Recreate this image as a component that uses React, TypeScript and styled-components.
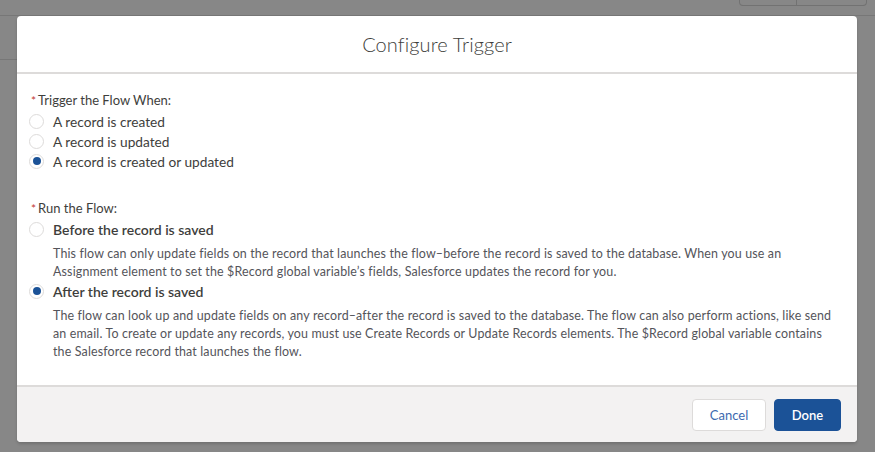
import React from "react";
import styled, { createGlobalStyle } from "styled-components";

const GlobalStyle = createGlobalStyle`
  html, body {
    margin: 0;
    padding: 0;
    background: #878787;
    font-family: "Lato", "Liberation Sans", sans-serif;
  }
  * {
    box-sizing: border-box;
  }
`;

const triggerOptions = [
  { id: "create", label: "A record is created", checked: false },
  { id: "update", label: "A record is updated", checked: false },
  { id: "both", label: "A record is created or updated", checked: true },
];

const runOptions = [
  {
    id: "before",
    label: "Before the record is saved",
    checked: false,
    description:
      "This flow can only update fields on the record that launches the flow\u2013before the record is saved to the database. When you use an Assignment element to set the $Record global variable\u2019s fields, Salesforce updates the record for you.",
  },
  {
    id: "after",
    label: "After the record is saved",
    checked: true,
    description:
      "The flow can look up and update fields on any record\u2013after the record is saved to the database. The flow can also perform actions, like send an email. To create or update any records, you must use Create Records or Update Records elements. The $Record global variable contains the Salesforce record that launches the flow.",
  },
];

const App = () => {
  return (
    <Page>
      <GlobalStyle />
      <UnderHeader>
        <ButtonGroup>
          <GroupButton />
          <GroupButton />
        </ButtonGroup>
      </UnderHeader>
      <UnderBody />

      <Modal>
        <ModalHeader>
          <Title>Configure Trigger</Title>
        </ModalHeader>
        <ModalBody>
          <Fieldset>
            <Legend>
              <Required>*</Required>Trigger the Flow When:
            </Legend>
            {triggerOptions.map((opt) => (
              <Option key={opt.id}>
                <Radio checked={opt.checked} />
                <OptionLabel>{opt.label}</OptionLabel>
              </Option>
            ))}
          </Fieldset>

          <Fieldset $spaced>
            <Legend>
              <Required>*</Required>Run the Flow:
            </Legend>
            {runOptions.map((opt) => (
              <RunOption key={opt.id}>
                <Option>
                  <Radio checked={opt.checked} />
                  <OptionTitle>{opt.label}</OptionTitle>
                </Option>
                <Description>{opt.description}</Description>
              </RunOption>
            ))}
          </Fieldset>
        </ModalBody>
        <ModalFooter>
          <NeutralButton>Cancel</NeutralButton>
          <BrandButton>Done</BrandButton>
        </ModalFooter>
      </Modal>
    </Page>
  );
};

export default App;

const Page = styled.div`
  position: relative;
  width: 875px;
  height: 452px;
  overflow: hidden;
  background: #878787;
`;

const UnderHeader = styled.div`
  height: 16px;
  border-bottom: 1px solid #777777;
  display: flex;
  justify-content: flex-end;
  padding-right: 8px;
`;

const ButtonGroup = styled.div`
  display: flex;
  height: 7px;
  margin-top: -1px;
  border: 1px solid #727272;
  border-top: none;
  border-radius: 0 0 4px 4px;
`;

const GroupButton = styled.div`
  width: 56px;
  & + & {
    border-left: 1px solid #727272;
    width: 70px;
  }
`;

const UnderBody = styled.div`
  height: 44px;
  border-bottom: 1px solid #777777;
  width: 17px;
`;

const Modal = styled.div`
  position: absolute;
  left: 17px;
  top: 16px;
  width: 840px;
  height: 426px;
  background: #ffffff;
  border-radius: 4px;
  overflow: hidden;
  display: flex;
  flex-direction: column;
  box-shadow: 0 2px 3px rgba(0, 0, 0, 0.16);
`;

const ModalHeader = styled.div`
  height: 58px;
  border-bottom: 2px solid #dddbda;
  display: flex;
  align-items: center;
  justify-content: center;
  padding-bottom: 1px;
`;

const Title = styled.h2`
  margin: 0;
  font-size: 20px;
  font-weight: 300;
  color: #3e3e3c;
  letter-spacing: 0.1px;
`;

const ModalBody = styled.div`
  flex: 1;
  padding: 17px 12px 0 12px;
  color: #3e3e3c;
`;

const Fieldset = styled.div<{ $spaced?: boolean }>`
  display: flex;
  flex-direction: column;
  margin-top: ${(p) => (p.$spaced ? "28px" : "0")};
`;

const Legend = styled.div`
  font-size: 13px;
  line-height: 18px;
  color: #3e3e3c;
  margin-bottom: 1px;
  padding-left: 2px;
`;

const Required = styled.span`
  color: #c23934;
  margin-right: 2px;
  font-size: 12px;
`;

const Option = styled.label`
  display: flex;
  align-items: center;
  height: 20px;
`;

const Radio = styled.span<{ checked?: boolean }>`
  width: 15px;
  height: 15px;
  border-radius: 50%;
  border: 1px solid #dddbda;
  background: #ffffff;
  display: inline-flex;
  align-items: center;
  justify-content: center;
  margin-right: 9px;
  flex-shrink: 0;

  &::after {
    content: "";
    display: ${(p) => (p.checked ? "block" : "none")};
    width: 8px;
    height: 8px;
    border-radius: 50%;
    background: #1b5297;
  }
`;

const OptionLabel = styled.span`
  font-size: 13.7px;
  color: #3e3e3c;
`;

const RunOption = styled.div`
  display: flex;
  flex-direction: column;
`;

const OptionTitle = styled.span`
  font-size: 14px;
  font-weight: 600;
  color: #3e3e3c;
`;

const Description = styled.p`
  margin: 6px 0 0 24px;
  font-size: 12.45px;
  letter-spacing: 0.15px;
  line-height: 18px;
  color: #54545a;
  max-width: 781px;
`;

const ModalFooter = styled.div`
  height: 57px;
  border-top: 2px solid #dddbda;
  background: #f3f2f2;
  display: flex;
  justify-content: flex-end;
  align-items: flex-start;
  gap: 8px;
  padding: 12px 16px 0 0;
`;

const BaseButton = styled.button`
  height: 32px;
  border-radius: 4px;
  font-family: "Lato", "Liberation Sans", sans-serif;
  font-size: 13px;
  padding: 0 16px;
  cursor: pointer;
`;

const NeutralButton = styled(BaseButton)`
  width: 74px;
  background: #ffffff;
  border: 1px solid #dddbda;
  color: #3c6ab0;
`;

const BrandButton = styled(BaseButton)`
  width: 67px;
  background: #1b5297;
  border: 1px solid #1b5297;
  color: #ffffff;
  font-weight: 600;
`;
